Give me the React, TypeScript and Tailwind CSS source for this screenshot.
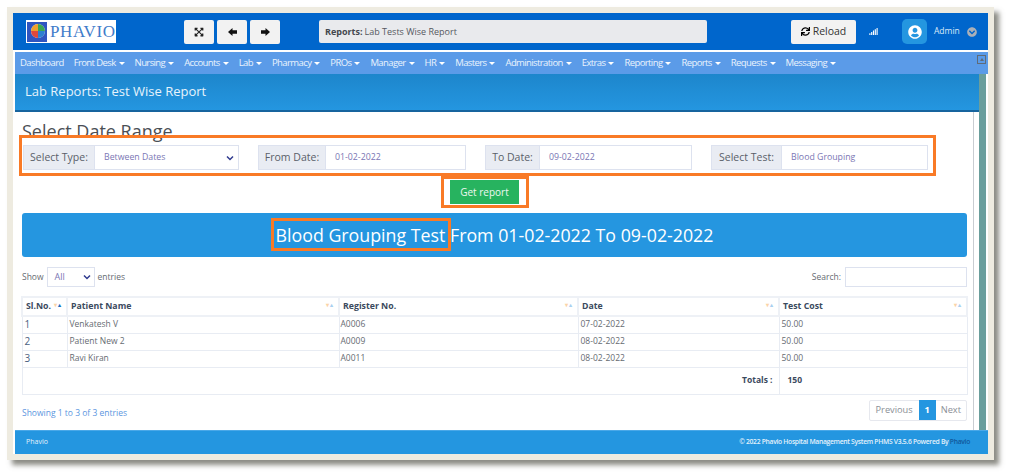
import { FaChevronCircleDown, FaExpandArrowsAlt, FaSignal, FaSync, FaUserCircle } from 'react-icons/fa';

const navItems = ['Front Desk', 'Nursing', 'Accounts', 'Lab', 'Pharmacy', 'PROs', 'Manager', 'HR', 'Masters', 'Administration', 'Extras', 'Reporting', 'Reports', 'Requests', 'Messaging'];

const rows = [
  { sl: '1', name: 'Venkatesh V', reg: 'A0006', date: '07-02-2022', cost: '50.00' },
  { sl: '2', name: 'Patient New 2', reg: 'A0009', date: '08-02-2022', cost: '50.00' },
  { sl: '3', name: 'Ravi Kiran', reg: 'A0011', date: '08-02-2022', cost: '50.00' },
];

const columns = [
  { label: 'Sl.No.', width: 'w-[45px]' },
  { label: 'Patient Name', width: 'w-[272px]' },
  { label: 'Register No.', width: 'w-[239px]' },
  { label: 'Date', width: 'w-[201px]' },
  { label: 'Test Cost', width: 'w-[188px]' },
];

const SortMark = ({ active }: { active?: boolean }) => (
  <span className="absolute right-[5px] top-[3px] flex gap-[1px] text-[6px] leading-[8px]">
    <span className="text-[#fbd3a8]">▾</span>
    <span className={active ? 'text-[#1a6fc0]' : 'text-[#a9d0f0]'}>▴</span>
  </span>
);

const Chevron = () => (
  <svg width="8" height="6" viewBox="0 0 8 6" className="mr-[1px]">
    <path d="M1 1.5 L4 4.5 L7 1.5" fill="none" stroke="#2f3a8f" strokeWidth="1.5" />
  </svg>
);

const Field = ({ label, value, labelWidth, width, select }: { label: string; value: string; labelWidth: string; width: string; select?: boolean }) => (
  <div className={`flex h-[25px] ${width}`}>
    <div className={`flex ${labelWidth} shrink-0 items-center justify-center border border-[#dde2ef] bg-[#e9ecf3] text-[10.5px] text-[#5a5f69]`}>{label}</div>
    <div className="flex flex-1 items-center justify-between border border-l-0 border-[#dde2ef] bg-white pl-[9px] pr-[3px] text-[8.75px] text-[#7a76b4]">
      <span>{value}</span>
      {select && <Chevron />}
    </div>
  </div>
);

const NavItem = ({ label }: { label: string }) => (
  <span className="flex items-center gap-[3px]">
    {label}
    <span className="h-0 w-0 border-x-[3px] border-t-[3px] border-x-transparent border-t-white" />
  </span>
);

const ToolButton = ({ children }: { children: React.ReactNode }) => (
  <button className="flex h-[24px] w-[30px] items-center justify-center rounded-[2px] bg-[#f2f2f2] text-[#222]">{children}</button>
);

const BlockArrow = ({ flip }: { flip?: boolean }) => (
  <svg width="9" height="8" viewBox="0 0 9 8" className={flip ? 'rotate-180' : ''}>
    <path d="M0 4 L4.5 0 V2.2 H9 V5.8 H4.5 V8 Z" fill="#111" />
  </svg>
);

export default function App() {
  return (
    <div className="h-[475px] w-[1009px] overflow-hidden bg-white pl-[7px] pt-[7px] font-['Open_Sans',sans-serif]">
      <div className="h-[453px] w-[987px] bg-[#eeebe0] p-[6px] shadow-[5px_5px_5px_rgba(90,90,80,0.7)]">
        <div className="flex h-[441px] w-[975px] flex-col bg-white">
          {/* top bar */}
          <div className="flex h-[37px] shrink-0 items-center bg-[#0066cc] pl-[13px]">
            <div className="flex h-[23px] w-[90px] items-center bg-white pl-[1px] font-['Liberation_Serif',serif] text-[17px] leading-none tracking-[0.6px] text-[#3f7cca]">
              <svg width="20" height="20" viewBox="0 0 20 20" className="mr-[3px] shrink-0">
                <rect width="20" height="20" fill="#2f55c0" />
                <circle cx="11" cy="9" r="7" fill="#f6f6f6" />
                <path d="M11 9 L11 2 A7 7 0 0 1 18 9 Z" fill="#3aa655" />
                <path d="M11 9 L18 9 A7 7 0 0 1 11 16 Z" fill="#2c7fd0" />
                <path d="M11 9 L11 16 A7 7 0 0 1 4 9 Z" fill="#e0483c" />
                <path d="M11 9 L4 9 A7 7 0 0 1 11 2 Z" fill="#f0a02c" />
              </svg>
              PHAVIO
            </div>
            <div className="ml-[68px] flex gap-[3px]">
              <ToolButton><FaExpandArrowsAlt className="text-[10px]" /></ToolButton>
              <ToolButton><BlockArrow /></ToolButton>
              <ToolButton><BlockArrow flip /></ToolButton>
            </div>
            <div className="ml-[39px] flex h-[23px] w-[388px] items-center rounded-[2px] bg-[#e9eaed] pl-[6px] text-[9px] text-[#55585e]">
              <b className="mr-[2px] text-[#44474d]">Reports:</b> Lab Tests Wise Report
            </div>
            <button className="ml-[84px] flex h-[24px] w-[65px] items-center justify-center gap-[3px] rounded-[2px] bg-[#f2f2f2] text-[10.5px] text-[#333]">
              <FaSync className="text-[9px] text-black" /> Reload
            </button>
            <FaSignal className="ml-[13px] text-[9px] text-white" />
            <div className="ml-[24px] flex h-[25px] w-[25px] items-center justify-center rounded-[5px] bg-[#2496e0] text-[14px] text-white">
              <FaUserCircle />
            </div>
            <span className="ml-[7px] text-[8.5px] text-[#dbe9f7]">Admin</span>
            <FaChevronCircleDown className="ml-[7px] text-[10px] text-[#aab0b8]" />
          </div>

          <div className="h-[2px] shrink-0 bg-white" />

          <div className="flex min-h-0 flex-1 pl-[2px]">
            <div className="flex min-w-0 flex-1 flex-col">
              {/* nav */}
              <nav className="relative flex h-[22px] shrink-0 items-center gap-[10px] bg-[#5b9be8] pl-[5px] text-[9.5px] tracking-[-0.6px] text-[#eaf3fd]">
                <span>Dashboard</span>
                {navItems.map((item) => <NavItem key={item} label={item} />)}
                <span className="absolute right-[2px] top-[3px] flex h-[9px] w-[9px] items-center justify-center border border-[#5f6b78]">
                  <span className="h-0 w-0 border-x-[2px] border-b-[3px] border-x-transparent border-b-[#5f6b78]" />
                </span>
              </nav>

              <div className="flex min-h-0 flex-1">
                <div className="flex min-w-0 flex-1 flex-col">
                  {/* title */}
                  <div className="flex h-[38px] shrink-0 items-center border-b-[2px] border-b-[#17649e] bg-gradient-to-b from-[#1d86cc] to-[#2496e0] pl-[10px] text-[13px] text-[#e6f3fc]">
                    Lab Reports: Test Wise Report
                  </div>

                  <div className="flex min-h-0 flex-1 bg-white pr-[5px]">
                    <div className="relative flex min-h-0 min-w-0 flex-1 flex-col overflow-hidden border-r border-r-[#c9cdd2] px-[7px]">
                      <h2 className="h-[30px] shrink-0 pt-[10px] text-[18px] leading-[18px] text-[#4a4f55]">Select Date Range</h2>
                      <div className="mt-[1px] flex shrink-0 gap-[19px] pl-[1px] pt-[2px]">
                        <Field label="Select Type:" value="Between Dates" labelWidth="w-[72px]" width="w-[216px]" select />
                        <Field label="From Date:" value="01-02-2022" labelWidth="w-[68px]" width="w-[208px]" />
                        <Field label="To Date:" value="09-02-2022" labelWidth="w-[55px]" width="w-[207px]" />
                        <Field label="Select Test:" value="Blood Grouping" labelWidth="w-[71px]" width="w-[217px]" />
                      </div>

                      <div className="mt-[10px] flex shrink-0 pl-[428px]">
                        <button className="h-[24px] w-[69px] bg-[#27b35f] text-[10px] text-[#eef8f1]">Get report</button>
                      </div>

                      <div className="mt-[9px] flex h-[44px] w-[945px] shrink-0 items-center justify-center rounded-[3px] bg-[#2596e0] text-[17.8px] text-white">
                        Blood Grouping Test From 01-02-2022 To 09-02-2022
                      </div>

                      <div className="mt-[10px] flex h-[20px] w-[945px] shrink-0 items-center justify-between text-[8.5px] text-[#666b72]">
                        <div className="flex items-center gap-[3px]">
                          Show
                          <div className="flex h-[20px] w-[48px] items-center justify-between border border-[#dde2ef] pl-[7px] pr-[2px] text-[9px] text-[#7a76b4]">
                            All <Chevron />
                          </div>
                          entries
                        </div>
                        <div className="flex items-center gap-[4px]">
                          Search:
                          <div className="h-[20px] w-[122px] border border-[#dde2ef]" />
                        </div>
                      </div>

                      <table className="-ml-[1px] mt-[9px] w-[945px] shrink-0 table-fixed border-collapse text-[8.5px] text-[#666b72]">
                        <thead>
                          <tr className="h-[19px] text-[8.75px] font-bold text-[#3b4a5e]">
                            {columns.map((col, i) => (
                              <th key={col.label} className={`relative border-2 border-[#eef1f6] pl-[3px] text-left ${col.width}`}>
                                {col.label}
                                <SortMark active={i === 0} />
                              </th>
                            ))}
                          </tr>
                        </thead>
                        <tbody>
                          {rows.map((row) => (
                            <tr key={row.sl} className="h-[17px]">
                              <td className="border border-[#e8ecf3] pl-[2px] text-[10px] text-[#4a5f80]">{row.sl}</td>
                              <td className="border border-[#e8ecf3] pl-[2px]">{row.name}</td>
                              <td className="border border-[#e8ecf3] pl-[1px]">{row.reg}</td>
                              <td className="border border-[#e8ecf3] pl-[2px]">{row.date}</td>
                              <td className="border border-[#e8ecf3] pl-[2px]">{row.cost}</td>
                            </tr>
                          ))}
                          <tr className="h-[27px] font-bold text-[#3b4a5e]">
                            <td colSpan={4} className="border border-[#e8ecf3] pr-[6px] text-right">Totals :</td>
                            <td className="border border-[#e8ecf3] pl-[8px]">150</td>
                          </tr>
                        </tbody>
                      </table>

                      <div className="mt-[5px] flex w-[945px] shrink-0 items-start justify-between">
                        <span className="mt-[7px] text-[8.5px] text-[#5b96e0]">Showing 1 to 3 of 3 entries</span>
                        <div className="flex h-[21px] items-center rounded-[2px] border border-[#e6e8ee] text-[9.25px] text-[#8a8f96]">
                          <span className="px-[6px]">Previous</span>
                          <span className="flex h-[20px] w-[17px] items-center justify-center bg-[#2496e0] font-bold text-white">1</span>
                          <span className="px-[5px]">Next</span>
                        </div>
                      </div>

                      {/* annotation boxes */}
                      <div className="absolute left-[4px] top-[23px] h-[41px] w-[917px] border-[3px] border-[#f97a26]" />
                      <div className="absolute left-[426px] top-[64px] h-[32px] w-[88px] border-[3px] border-[#f97a26]" />
                      <div className="absolute left-[256px] top-[106px] h-[33px] w-[180px] border-[3px] border-[#f97a26]" />
                    </div>
                  </div>
                </div>
                <div className="w-[7px] shrink-0 bg-[#6a9e9c]" />
                <div className="w-[2px] shrink-0 bg-white" />
              </div>
            </div>
          </div>

          {/* footer */}
          <div className="ml-[2px] flex h-[24px] shrink-0 items-center justify-between border-t border-t-[#4aa8e8] bg-[#2496e0] pl-[11px] pr-[18px] text-[7px] text-[#e3f1fb]">
            <span>Phavio</span>
            <span className="text-[6.75px] font-semibold tracking-[-0.3px]">© 2022 Phavio Hospital Management System PHMS V3.5.6 Powered By <span className="text-[#10589c]">Phavio</span></span>
          </div>
        </div>
      </div>
    </div>
  );
}
